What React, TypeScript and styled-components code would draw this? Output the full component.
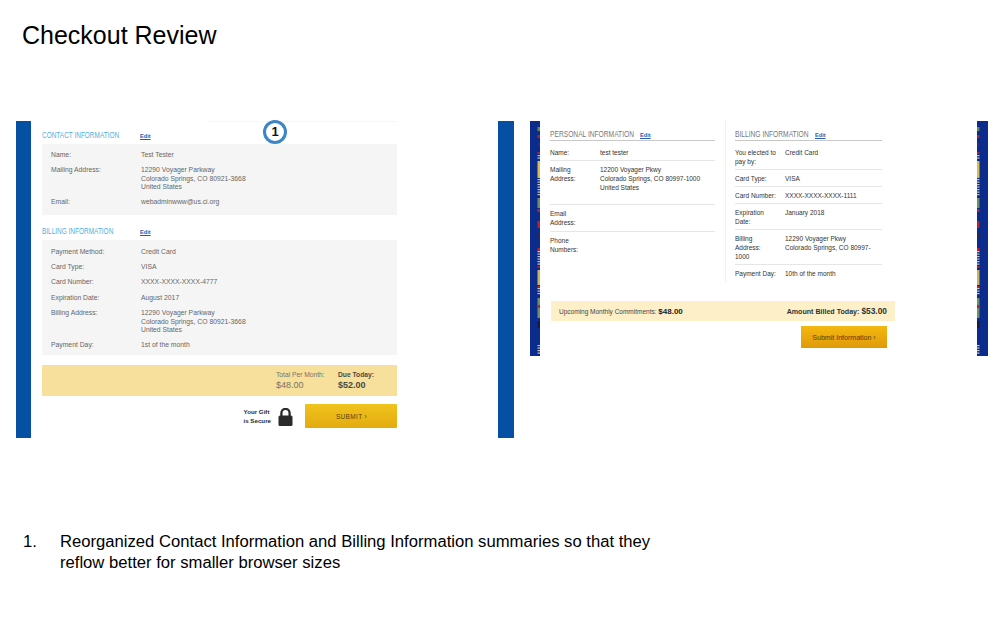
import React from 'react'
import styled, { createGlobalStyle } from 'styled-components'

const GlobalStyle = createGlobalStyle`
html, body {
  margin: 0;
  padding: 0;
  background: #fff;
  font-family: "Liberation Sans", Arial, sans-serif;
}
`

// colour blocks along the edge of the fabric pattern: y, height, colour
const stripeBlocks: [number, number, string][] = [
  [6, 4, '#5f8a5c'], [14, 3, '#b8202e'], [22, 3, '#27306e'], [31, 2, '#b8202e'],
  [40, 17, '#d8bd4a'], [77, 10, '#6f9062'], [88, 3, '#b8202e'], [100, 7, '#b8202e'],
  [112, 4, '#2b2b40'], [127, 3, '#b8202e'], [145, 2, '#b8202e'], [149, 15, '#c8b45a'],
  [165, 2, '#b8202e'], [177, 20, '#6f9068'], [184, 3, '#b8202e'], [200, 7, '#1c1c30'],
]
const stripeDashes = [
  [34, 6], [58, 18], [130, 15], [167, 8], [224, 11],
]

function Stripe({ flip }: { flip?: boolean }) {
  const x = flip ? 0 : 7.5
  return (
    <StripeArt $flip={flip} viewBox={`0 0 ${flip ? 11 : 10} 235`} preserveAspectRatio="none" aria-hidden="true">
      <rect x="0" y="0" width="11" height="235" fill="#0b2c8c" />
      {stripeBlocks.map(([y, h, fill]) => (
        <rect key={`${y}-${fill}`} x={x} y={y} width="2.5" height={h} fill={fill} />
      ))}
      {stripeDashes.map(([start, len]) =>
        Array.from({ length: Math.floor(len / 2.5) }, (_, i) => (
          <rect key={`${start}-${i}`} x={x} y={start + i * 2.5} width="2.5" height="1.2" fill="#c4c4d0" />
        ))
      )}
    </StripeArt>
  )
}

const screens = {
  contact: [
    { label: 'Name:', value: ['Test Tester'] },
    { label: 'Mailing Address:', value: ['12290 Voyager Parkway', 'Colorado Springs, CO 80921-3668', 'United States'] },
    { label: 'Email:', value: ['webadminwww@us.ci.org'] },
  ],
  billing: [
    { label: 'Payment Method:', value: ['Credit Card'] },
    { label: 'Card Type:', value: ['VISA'] },
    { label: 'Card Number:', value: ['XXXX-XXXX-XXXX-4777'] },
    { label: 'Expiration Date:', value: ['August 2017'] },
    { label: 'Billing Address:', value: ['12290 Voyager Parkway', 'Colorado Springs, CO 80921-3668', 'United States'] },
    { label: 'Payment Day:', value: ['1st of the month'] },
  ],
  personalAfter: [
    { label: ['Name:'], value: ['test tester'], h: 20 },
    { label: ['Mailing', 'Address:'], value: ['12200 Voyager Pkwy', 'Colorado Springs, CO 80997-1000', 'United States'], h: 44 },
    { label: ['Email', 'Address:'], value: [], h: 27 },
    { label: ['Phone', 'Numbers:'], value: [], h: 27 },
  ],
  billingAfter: [
    { label: ['You elected to', 'pay by:'], value: ['Credit Card'], h: 29 },
    { label: ['Card Type:'], value: ['VISA'], h: 17 },
    { label: ['Card Number:'], value: ['XXXX-XXXX-XXXX-1111'], h: 17 },
    { label: ['Expiration', 'Date:'], value: ['January 2018'], h: 26 },
    { label: ['Billing', 'Address:', '1000'], value: ['12290 Voyager Pkwy', 'Colorado Springs, CO 80997-'], h: 35 },
    { label: ['Payment Day:'], value: ['10th of the month'], h: 17 },
  ],
}

function Lines({ lines }: { lines: string[] }) {
  return (
    <>
      {lines.map((l) => (
        <div key={l}>{l}</div>
      ))}
    </>
  )
}

export default function App() {
  return (
    <Page>
      <GlobalStyle />
      <Title>Checkout Review</Title>
      <Screens>
        <Before>
          <BlueBar $w={15} />
          <BeforeMain>
            <TopRule />
            <Badge>1</Badge>
            <SectionHead>
              <SectionTitle>CONTACT INFORMATION</SectionTitle>
              <EditLink>Edit</EditLink>
            </SectionHead>
            <GrayBox>
              {screens.contact.map((r) => (
                <GrayRow key={r.label}>
                  <GrayLabel>{r.label}</GrayLabel>
                  <div><Lines lines={r.value} /></div>
                </GrayRow>
              ))}
            </GrayBox>
            <SectionHead $second>
              <SectionTitle>BILLING INFORMATION</SectionTitle>
              <EditLink>Edit</EditLink>
            </SectionHead>
            <GrayBox $last>
              {screens.billing.map((r) => (
                <GrayRow key={r.label}>
                  <GrayLabel>{r.label}</GrayLabel>
                  <div><Lines lines={r.value} /></div>
                </GrayRow>
              ))}
            </GrayBox>
            <TotalBar>
              <TotalCol $w={62}>
                <TotalLabel>Total Per Month:</TotalLabel>
                <TotalValue>$48.00</TotalValue>
              </TotalCol>
              <TotalCol $w={59} $due>
                <TotalLabel>Due Today:</TotalLabel>
                <TotalValue>$52.00</TotalValue>
              </TotalCol>
            </TotalBar>
            <ActionRow>
              <Secure>Your Gift<br />is Secure</Secure>
              <LockIcon width="15" height="18" viewBox="0 0 15 18" aria-hidden="true">
                <path d="M3.4 8V5a4.1 4.1 0 0 1 8.2 0V8" fill="none" stroke="#2b2b2b" strokeWidth="2.3" />
                <rect x="0.5" y="7.5" width="14" height="10.5" rx="1.5" fill="#2b2b2b" />
              </LockIcon>
              <SubmitButton><NarrowText $scale={0.8}>SUBMIT ›</NarrowText></SubmitButton>
            </ActionRow>
          </BeforeMain>
        </Before>
        <After>
          <BlueBar $w={16} />
          <StripeLeft><Stripe /></StripeLeft>
          <AfterMain>
            <AfterColumns>
              <PersonalCol>
                <AfterHead>
                  <AfterTitle $w={90}>PERSONAL INFORMATION</AfterTitle>
                  <EditLink>Edit</EditLink>
                </AfterHead>
                {screens.personalAfter.map((r) => (
                  <AfterRow key={r.label[0]} $h={r.h}>
                    <div><Lines lines={r.label} /></div>
                    <div><Lines lines={r.value} /></div>
                  </AfterRow>
                ))}
              </PersonalCol>
              <BillingCol>
                <AfterHead>
                  <AfterTitle $w={80}>BILLING INFORMATION</AfterTitle>
                  <EditLink>Edit</EditLink>
                </AfterHead>
                {screens.billingAfter.map((r) => (
                  <AfterRow key={r.label[0]} $h={r.h}>
                    <div><Lines lines={r.label} /></div>
                    <div><Lines lines={r.value} /></div>
                  </AfterRow>
                ))}
              </BillingCol>
            </AfterColumns>
            <BilledBar>
              <span>Upcoming Monthly Commitments: <strong>$48.00</strong></span>
              <BilledToday>Amount Billed Today: <b>$53.00</b></BilledToday>
            </BilledBar>
            <SubmitRow>
              <SubmitInfo><NarrowText $scale={0.88}>Submit Information ›</NarrowText></SubmitInfo>
            </SubmitRow>
          </AfterMain>
          <Stripe flip />
        </After>
      </Screens>
      <Notes>
        <NoteNumber>1.</NoteNumber>
        <NoteText>
          Reorganized Contact Information and Billing Information summaries so that they reflow better for smaller browser sizes
        </NoteText>
      </Notes>
    </Page>
  )
}

const Page = styled.div`
width: 1000px;
height: 625px;
overflow: hidden;
background: #fff;
`
const Title = styled.h1`
margin: 0;
padding: 20px 0 0 22px;
font-size: 25px;
line-height: 30px;
font-weight: 400;
color: #000;
`
const Screens = styled.div`
display: flex;
margin-top: 71px;
padding-left: 16px;
gap: 101px;
`
const Before = styled.div`
display: flex;
width: 381px;
height: 317px;
`
const BlueBar = styled.div<{ $w: number }>`
width: ${({ $w }) => $w}px;
height: 317px;
flex: none;
background: #0650a4;
`
const BeforeMain = styled.div`
position: relative;
flex: 1;
margin-left: 11px;
`
const TopRule = styled.div`
position: absolute;
top: 0;
left: 165px;
right: 0;
height: 1px;
background: #fbf8e0;
`
const Badge = styled.div`
position: absolute;
top: -1px;
left: 221px;
width: 24px;
height: 24px;
box-sizing: border-box;
border: 3px solid #3d85c6;
border-radius: 50%;
background: #fff;
color: #111;
font-size: 13px;
font-weight: 700;
line-height: 18px;
text-align: center;
`
const SectionHead = styled.div<{ $second?: boolean }>`
display: flex;
align-items: flex-end;
height: 23px;
box-sizing: border-box;
padding-bottom: 4px;
margin-top: ${({ $second }) => ($second ? '2px' : '0')};
`
const SectionTitle = styled.div`
width: 98px;
flex: none;
font-size: 8.5px;
line-height: 10px;
color: #4fb0dc;
white-space: nowrap;
transform: scaleX(0.76);
transform-origin: left;
`
const EditLink = styled.span`
font-size: 5.6px;
line-height: 8px;
font-weight: 700;
color: #2a5ea8;
text-decoration: underline;
`
const GrayBox = styled.div<{ $last?: boolean }>`
display: flex;
flex-direction: column;
gap: ${({ $last }) => ($last ? '6.5px' : '6.3px')};
height: ${({ $last }) => ($last ? '115px' : '71px')};
box-sizing: border-box;
padding: ${({ $last }) => ($last ? '8px' : '7px')} 0 0 9px;
background: #f5f5f5;
font-size: 6.8px;
line-height: 8.7px;
color: #666;
`
const GrayRow = styled.div`
display: flex;
`
const GrayLabel = styled.div`
width: 90px;
flex: none;
`
const TotalBar = styled.div`
display: flex;
justify-content: flex-end;
height: 31px;
box-sizing: border-box;
margin-top: 10px;
padding-top: 5px;
background: #f6e09c;
`
const TotalCol = styled.div<{ $w: number; $due?: boolean }>`
width: ${({ $w }) => $w}px;
color: ${({ $due }) => ($due ? '#4a4a44' : '#77746a')};
font-weight: ${({ $due }) => ($due ? 700 : 400)};
`
const TotalLabel = styled.div`
font-size: 6.7px;
line-height: 9px;
`
const TotalValue = styled.div`
font-size: 9px;
line-height: 12px;
`
const ActionRow = styled.div`
display: flex;
align-items: center;
justify-content: flex-end;
margin-top: 8px;
height: 24px;
`
const Secure = styled.div`
margin-right: 7px;
font-size: 6.2px;
line-height: 9px;
font-weight: 700;
color: #2a2a2a;
`
const LockIcon = styled.svg`
flex: none;
margin-top: 2px;
`
const NarrowText = styled.span<{ $scale: number }>`
display: inline-block;
white-space: nowrap;
transform: scaleX(${({ $scale }) => $scale});
`
const SubmitButton = styled.div`
display: flex;
align-items: center;
justify-content: center;
width: 92px;
height: 24px;
margin-left: 12px;
border-radius: 1px;
background: linear-gradient(180deg, #f0c31c, #e3ab10);
color: #54420c;
font-size: 8px;
letter-spacing: 0.5px;
`
const After = styled.div`
display: flex;
width: 490px;
height: 317px;
`
const StripeLeft = styled.div`
margin-left: 16px;
flex: none;
`
const StripeArt = styled.svg<{ $flip?: boolean }>`
display: block;
flex: none;
width: ${({ $flip }) => ($flip ? 11 : 10)}px;
height: 235px;
`
const AfterMain = styled.div`
width: 345px;
flex: none;
margin: 0 82px 0 10px;
`
const AfterColumns = styled.div`
display: flex;
height: 180px;
`
const PersonalCol = styled.div`
width: 165px;
flex: none;
`
const BillingCol = styled.div`
width: 147px;
flex: none;
align-self: flex-start;
margin-left: 10px;
padding-left: 9px;
border-left: 1px solid #f1f1f1;
`
const AfterHead = styled.div`
display: flex;
align-items: flex-end;
height: 20px;
box-sizing: border-box;
padding-bottom: 1px;
border-bottom: 1px solid #c8c8c8;
`
const AfterTitle = styled.div<{ $w: number }>`
width: ${({ $w }) => $w}px;
flex: none;
font-size: 9px;
line-height: 10px;
color: #77787c;
white-space: nowrap;
transform: scaleX(0.74);
transform-origin: left;
`
const AfterRow = styled.div<{ $h: number }>`
display: grid;
grid-template-columns: 50px 1fr;
height: ${({ $h }) => $h}px;
box-sizing: border-box;
padding-top: 4px;
border-bottom: 1px solid #e6e6e6;
font-size: 6.5px;
line-height: 9px;
color: #333;

&:nth-child(2) {
  padding-top: 7px;
}

&:last-child {
  border-bottom: none;
}
`
const BilledBar = styled.div`
display: flex;
align-items: center;
justify-content: space-between;
height: 20px;
margin-left: 1px;
padding: 0 8px;
background: #fdf0c8;
font-size: 6.5px;
color: #444;

strong {
  font-size: 8px;
  color: #222;
}
`
const BilledToday = styled.span`
font-weight: 700;
font-size: 7.1px;
color: #333;

b {
  font-size: 8.4px;
}
`
const SubmitRow = styled.div`
display: flex;
justify-content: flex-end;
margin-top: 5px;
padding-right: 8px;
`
const SubmitInfo = styled.div`
display: flex;
align-items: center;
justify-content: center;
width: 86px;
height: 22px;
background: linear-gradient(180deg, #f4b810, #e09a0a);
color: #5a3c08;
font-size: 8px;
`
const Notes = styled.div`
display: flex;
margin-top: 93px;
padding-left: 23px;
font-size: 16.65px;
line-height: 21px;
color: #000;
`
const NoteNumber = styled.div`
width: 37px;
flex: none;
`
const NoteText = styled.div`
width: 600px;
`
